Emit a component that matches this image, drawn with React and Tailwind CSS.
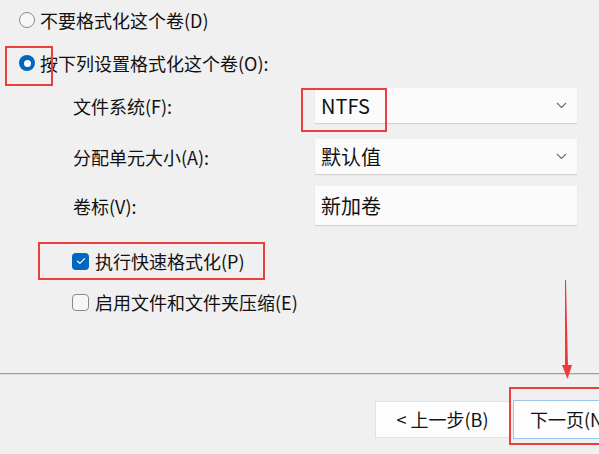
import React from "react";

const font = { fontFamily: '"Noto Sans CJK SC", "Noto Sans", sans-serif' };

function Radio({ checked }) {
  if (checked) {
    return (
      <span className="flex h-[16px] w-[16px] shrink-0 items-center justify-center rounded-full bg-[#0067c0]">
        <span className="h-[7px] w-[7px] rounded-full bg-white" />
      </span>
    );
  }
  return <span className="h-[16px] w-[16px] shrink-0 rounded-full border border-[#8a8a8a] bg-[#f7f7f7]" />;
}

function Check({ checked }) {
  if (checked) {
    return (
      <span className="flex h-[17px] w-[17px] shrink-0 items-center justify-center rounded-[4px] bg-[#0067c0]">
        <svg width="10" height="8" viewBox="0 0 10 8" fill="none">
          <path d="M1.5 4.2 L3.9 6.4 L8.6 1.6" stroke="white" strokeWidth="1.2" strokeLinecap="round" strokeLinejoin="round" />
        </svg>
      </span>
    );
  }
  return <span className="h-[17px] w-[17px] shrink-0 rounded-[4px] border border-[#8a8a8a] bg-[#f7f7f7]" />;
}

function Chevron() {
  return (
    <svg width="11" height="7" viewBox="0 0 11 7" fill="none">
      <path d="M1 1 L5.5 5.5 L10 1" stroke="#6b6b6b" strokeWidth="1.1" />
    </svg>
  );
}

function Field({ value, dropdown, h }) {
  return (
    <div
      className={`flex w-[262px] items-center justify-between bg-[#fbfbfb] pl-[6px] pr-[10px] text-[20px] text-[#111] shadow-[0_1px_1px_rgba(0,0,0,0.12)] ${h}`}
    >
      <span>{value}</span>
      {dropdown ? <Chevron /> : null}
    </div>
  );
}

export default function App() {
  return (
    <div className="relative h-[454px] w-[599px] overflow-hidden bg-[#f0f0f0] text-[18px] text-[#111]" style={font}>
      <div className="flex flex-col">
        {/* format choice */}
        <div className="mt-[7px] flex h-[26px] items-center gap-[5px] pl-[19px]">
          <Radio />
          <span>不要格式化这个卷(D)</span>
        </div>
        <div className="mt-[17px] flex h-[26px] items-center gap-[5px] pl-[19px]">
          <Radio checked />
          <span>按下列设置格式化这个卷(O):</span>
        </div>

        {/* settings */}
        <div className="mt-[12px] flex flex-col pl-[73px]">
          <div className="flex items-center">
            <span className="w-[242px] pt-[1px]">文件系统(F):</span>
            <Field value="NTFS" dropdown h="h-[35px]" />
          </div>
          <div className="mt-[16px] flex items-center">
            <span className="w-[242px] pt-[2px]">分配单元大小(A):</span>
            <Field value="默认值" dropdown h="h-[35px]" />
          </div>
          <div className="mt-[12px] flex items-center">
            <span className="w-[242px] pt-[2px]">卷标(V):</span>
            <Field value="新加卷" h="h-[39px]" />
          </div>
        </div>

        {/* options */}
        <div className="mt-[23px] flex h-[26px] items-center gap-[6px] pl-[72px]">
          <Check checked />
          <span>执行快速格式化(P)</span>
        </div>
        <div className="mt-[15px] flex h-[26px] items-center gap-[6px] pl-[72px]">
          <Check />
          <span>启用文件和文件夹压缩(E)</span>
        </div>

        {/* footer */}
        <div className="mt-[58px] h-[2px] border-t border-b border-t-[#a0a0a0] border-b-[#dadada]" />
        <div className="mt-[26px] flex gap-[3px] pl-[375px]">
          <div className="flex h-[37px] w-[135px] shrink-0 items-center justify-center border border-[#e2e2e2] bg-[#fdfdfd]">
            &lt; 上一步(B)
          </div>
          <div className="-mt-[1px] flex h-[39px] w-[135px] shrink-0 items-center border border-[#9cc7ea] bg-[#fdfdfd] pl-[16px]">
            下一页(N)
          </div>
        </div>
      </div>

      {/* highlight boxes */}
      <div className="absolute left-[5px] top-[46px] h-[40px] w-[48px] border-2 border-[#e8403e]" />
      <div className="absolute left-[301px] top-[88px] h-[44px] w-[86px] border-2 border-[#e8403e]" />
      <div className="absolute left-[38px] top-[242px] h-[38px] w-[227px] border-2 border-[#e8403e]" />
      <div className="absolute left-[509px] top-[387px] h-[58px] w-[100px] border-2 border-[#e8403e]" />

      {/* pointer arrow */}
      <svg className="absolute left-[555px] top-[275px]" width="30" height="110" viewBox="0 0 30 110">
        <polygon points="10,5 11,5 13,92 10,92" fill="#f03a3a" />
        <polygon points="7,90 17,90 12.5,104" fill="#f03a3a" />
      </svg>
    </div>
  );
}
